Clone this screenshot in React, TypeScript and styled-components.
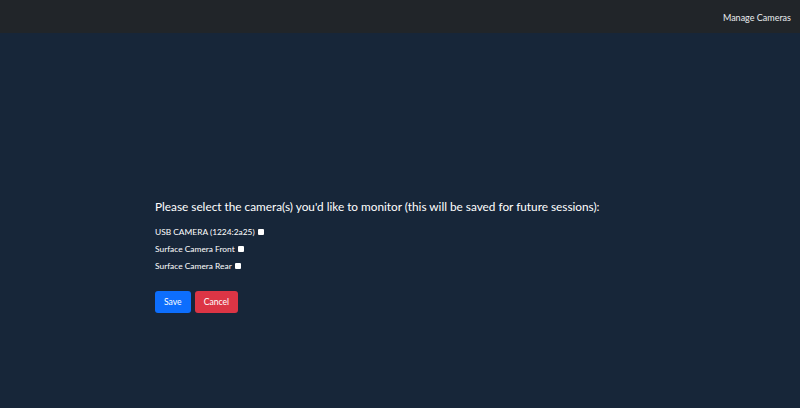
import React from "react"
import styled, { createGlobalStyle } from "styled-components"

const GlobalStyle = createGlobalStyle`
    html, body {
        margin: 0;
        padding: 0;
        height: 100%;
        background: #172639;
    }
    #root {
        min-height: 100%;
    }
    body {
        font-family: Lato, "Noto Sans", sans-serif;
        color: #ffffff;
    }
`

const Page = styled.div`
    display: flex;
    flex-direction: column;
    height: 408px;
`

const TopBar = styled.header`
    height: 33px;
    background: #212529;
    display: flex;
    align-items: center;
    justify-content: flex-end;
    padding: 0 9px 0 0;
`

const NavLink = styled.a`
    color: #e9ecef;
    font-size: 9px;
    text-decoration: none;
    margin-top: 1px;
`

const Main = styled.main`
    flex: 1;
    padding: 165px 0 0 155px;
`

const Title = styled.h2`
    margin: 0 0 11px;
    font-size: 11.8px;
    font-weight: 400;
    line-height: 17px;
`

const Options = styled.div`
    display: flex;
    flex-direction: column;
    gap: 5px;
`

const Option = styled.label`
    display: flex;
    align-items: center;
    gap: 3px;
    font-size: 8.4px;
    line-height: 12px;
`

const Box = styled.span`
    width: 6px;
    height: 6px;
    background: #ffffff;
    border-radius: 1px;
`

const Actions = styled.div`
    display: flex;
    gap: 4px;
    margin-top: 19px;
`

const Button = styled.button<{ $variant: "primary" | "danger" }>`
    height: 22px;
    padding: 0 9px;
    border: none;
    border-radius: 3px;
    font-family: inherit;
    font-size: 8.6px;
    color: #ffffff;
    background: ${p => (p.$variant === "primary" ? "#0d6efd" : "#dc3545")};
`

const cameras = ["USB CAMERA (1224:2a25)", "Surface Camera Front", "Surface Camera Rear"]

const App = () => {
    return (
        <Page>
            <GlobalStyle />
            <TopBar>
                <NavLink href="#">Manage Cameras</NavLink>
            </TopBar>
            <Main>
                <Title>Please select the camera(s) you'd like to monitor (this will be saved for future sessions):</Title>
                <Options>
                    {cameras.map(c => (
                        <Option key={c}>
                            {c}
                            <Box />
                        </Option>
                    ))}
                </Options>
                <Actions>
                    <Button $variant="primary">Save</Button>
                    <Button $variant="danger">Cancel</Button>
                </Actions>
            </Main>
        </Page>
    )
}

export default App
